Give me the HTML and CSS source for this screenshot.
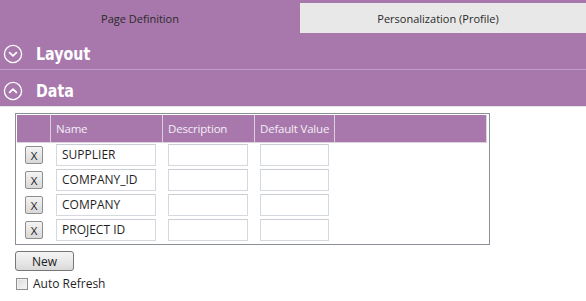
FILE: index.html
```html
<!DOCTYPE html>
<html>
<head>
<meta charset="utf-8">
<link rel="stylesheet" href="styles.css">
</head>
<body>
<div class="tabs">
  <div class="tab tab-active">Page Definition</div>
  <div class="tab tab-inactive">Personalization (Profile)</div>
</div>
<div class="section">
  <svg class="sec-icon" width="20" height="20" viewBox="0 0 20 20"><circle cx="10" cy="10" r="8.6" fill="none" stroke="#fff" stroke-width="1.3"/><path d="M6.6 8.6 L10 11.8 L13.4 8.6" fill="none" stroke="#fff" stroke-width="1.8" stroke-linecap="round" stroke-linejoin="round"/></svg>
  <span class="sec-title">Layout</span>
</div>
<div class="section section-last">
  <svg class="sec-icon" width="20" height="20" viewBox="0 0 20 20"><circle cx="10" cy="10" r="8.6" fill="none" stroke="#fff" stroke-width="1.3"/><path d="M6.6 11.4 L10 8.2 L13.4 11.4" fill="none" stroke="#fff" stroke-width="1.8" stroke-linecap="round" stroke-linejoin="round"/></svg>
  <span class="sec-title">Data</span>
</div>
<div class="content">
  <div class="grid">
    <div class="row head">
      <div class="hc"></div>
      <div class="hc">Name</div>
      <div class="hc">Description</div>
      <div class="hc">Default Value</div>
      <div class="hc"></div>
    </div>
    <div class="row">
      <div class="c c-x"><span class="xbtn">X</span></div>
      <div class="c"><span class="inp inp-name">SUPPLIER</span></div>
      <div class="c"><span class="inp inp-desc"></span></div>
      <div class="c"><span class="inp inp-def"></span></div>
      <div class="c"></div>
    </div>
    <div class="row">
      <div class="c c-x"><span class="xbtn">X</span></div>
      <div class="c"><span class="inp inp-name">COMPANY_ID</span></div>
      <div class="c"><span class="inp inp-desc"></span></div>
      <div class="c"><span class="inp inp-def"></span></div>
      <div class="c"></div>
    </div>
    <div class="row">
      <div class="c c-x"><span class="xbtn">X</span></div>
      <div class="c"><span class="inp inp-name">COMPANY</span></div>
      <div class="c"><span class="inp inp-desc"></span></div>
      <div class="c"><span class="inp inp-def"></span></div>
      <div class="c"></div>
    </div>
    <div class="row">
      <div class="c c-x"><span class="xbtn">X</span></div>
      <div class="c"><span class="inp inp-name">PROJECT ID</span></div>
      <div class="c"><span class="inp inp-desc"></span></div>
      <div class="c"><span class="inp inp-def"></span></div>
      <div class="c"></div>
    </div>
  </div>
  <span class="newbtn">New</span>
  <label class="check"><span class="box"></span>Auto Refresh</label>
</div>
</body>
</html>
```
FILE: styles.css
```css
* { box-sizing: border-box; }
html, body { margin: 0; padding: 0; background: #fff; }
body {
  width: 586px;
  height: 301px;
  overflow: hidden;
  font-family: "Open Sans", "Noto Sans", sans-serif;
  color: #1f1f1f;
}
.tabs {
  display: flex;
  height: 33px;
  background: #a878ad;
}
.tab {
  font-size: 11px;
  color: #2a2a2a;
  text-align: center;
  white-space: nowrap;
}
.tab-active {
  width: 300px;
  padding: 11px 20px 0 0;
}
.tab-inactive {
  flex: 1;
  margin-top: 3px;
  background: #e8e8e8;
  padding: 8px 10px 0 0;
}
.section {
  display: flex;
  align-items: center;
  height: 37px;
  background: #a878ad;
  border-bottom: 1px solid #c09fc4;
  padding: 5px 0 0 3px;
}
.section-last {
  border-bottom: 1px solid #e4e4e4;
}
.sec-icon { display: block; flex: none; }
.sec-title {
  display: inline-block;
  margin-left: 13px;
  font-family: "DejaVu Sans", sans-serif;
  font-weight: bold;
  font-size: 18px;
  color: #fff;
  transform: scaleX(0.79);
  transform-origin: left center;
}
.content {
  padding: 6px 0 0 15px;
}
.grid {
  width: 475px;
  border: 1px solid #8b9096;
  padding: 1px 2px 0 1px;
}
.row {
  display: grid;
  grid-template-columns: 34px 112px 92px 80px 1fr;
  height: 25px;
}
.row.head {
  height: 28px;
  background: #a878ad;
  border-bottom: 1px solid #d9d2db;
  margin-bottom: 1px;
}
.hc {
  border-right: 1px solid #d9d2db;
  color: #f3eef4;
  font-size: 11.5px;
  letter-spacing: -0.2px;
  white-space: nowrap;
  overflow: hidden;
  padding: 6px 0 0 5px;
}
.c {
  padding-left: 5px;
}
.c-x { padding: 2px 0 0 8px; }
.xbtn {
  display: flex;
  align-items: center;
  justify-content: center;
  width: 18px;
  height: 18px;
  border: 1px solid #8e8e8e;
  border-radius: 2px;
  background: linear-gradient(#f4f4f4, #e6e6e6 50%, #d8d8d8);
  font-size: 11.5px;
  color: #222;
}
.inp {
  display: block;
  height: 22px;
  border: 1px solid #d4d9df;
  border-top-color: #c9ced4;
  font-size: 12px;
  line-height: 20px;
  padding-left: 5px;
  color: #1f1f1f;
  background: #fff;
  white-space: nowrap;
}
.inp-name { width: 100px; }
.inp-desc { width: 80px; }
.inp-def { width: 69px; }
.newbtn {
  display: flex;
  align-items: center;
  justify-content: center;
  width: 59px;
  height: 20px;
  margin-top: 6px;
  border: 1px solid #777;
  border-radius: 3px;
  background: linear-gradient(#f5f5f5, #e9e9e9 50%, #d9d9d9);
  font-size: 12px;
  color: #222;
}
.check {
  display: flex;
  align-items: center;
  margin-top: 4px;
  font-size: 12px;
  color: #1f1f1f;
}
.box {
  width: 12px;
  height: 12px;
  margin: 0 5px 0 1px;
  border: 1px solid #8f8f8f;
  background: linear-gradient(135deg, #dcdcdc, #f7f7f7);
  box-shadow: inset 0 0 0 1px #f0f0f0;
}
```
